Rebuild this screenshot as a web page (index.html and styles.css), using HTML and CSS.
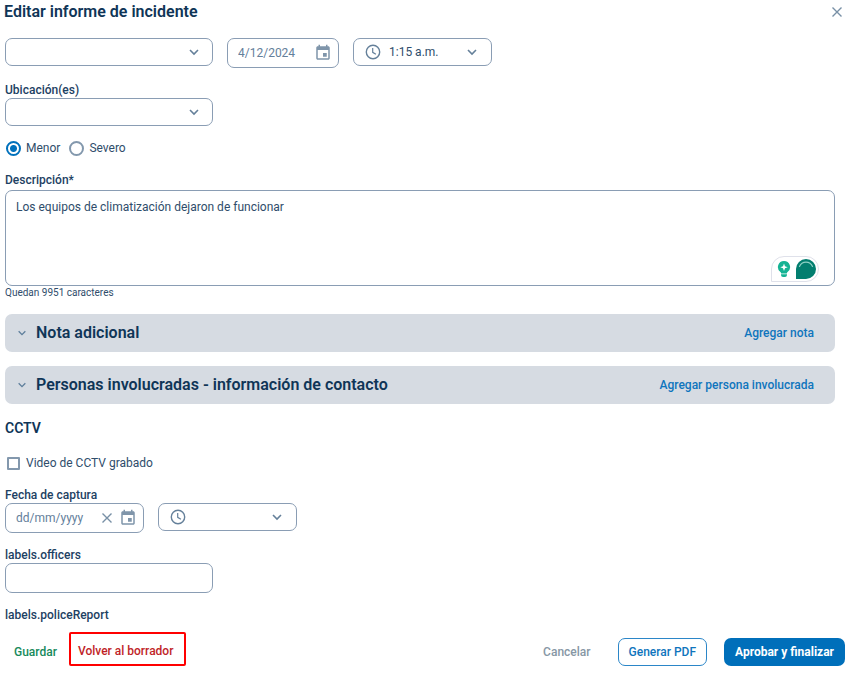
FILE: index.html
```html
<!DOCTYPE html>
<html lang="es">
<head>
  <meta charset="utf-8">
  <meta name="viewport" content="width=device-width, initial-scale=1">
  <title>Editar informe de incidente</title>
  <link rel="stylesheet" href="styles.css">
</head>
<body>
  <svg class="icon-defs" aria-hidden="true">
    <symbol id="icon-chevron" viewBox="0 0 12 12">
      <path d="M2 4l4 4 4-4" fill="none" stroke="currentColor" stroke-width="1.6"/>
    </symbol>
    <symbol id="icon-close" viewBox="0 0 12 12">
      <path d="M1.500 1.500l9 9M10.500 1.500l-9 9" fill="none" stroke="currentColor" stroke-width="1.400"/>
    </symbol>
    <symbol id="icon-calendar" viewBox="0 0 24 24">
      <path d="M17 12h-5v5h5v-5zM16 1v2H8V1H6v2H5c-1.110 0-1.990.9-1.990 2L3 19c0 1.100.89 2 2 2h14c1.100 0 2-.9 2-2V5c0-1.100-.9-2-2-2h-1V1h-2zm3 18H5V8h14v11z" fill="currentColor"/>
    </symbol>
    <symbol id="icon-clock" viewBox="0 0 16 16">
      <circle cx="8" cy="8" r="6.700" fill="none" stroke="currentColor" stroke-width="1.400"/>
      <path d="M7.700 4v4.300l3.200 2" fill="none" stroke="currentColor" stroke-width="1.200"/>
    </symbol>
  </svg>

  <form class="dialog">
    <header class="dialog-header">
      <h1 class="dialog-title">Editar informe de incidente</h1>
      <button type="button" class="icon-button" aria-label="Cerrar">
        <svg class="icon-sm"><use href="#icon-close"/></svg>
      </button>
    </header>

    <main class="dialog-content">
      <div class="row">
        <div class="control control-wide">
          <select class="control-input" aria-label="Tipo de incidente"><option></option></select>
          <svg class="icon-sm"><use href="#icon-chevron"/></svg>
        </div>
        <div class="control control-date">
          <input class="control-input muted" type="text" value="4/12/2024" aria-label="Fecha">
          <button type="button" class="icon-button" aria-label="Abrir calendario">
            <svg class="icon-lg calendar"><use href="#icon-calendar"/></svg>
          </button>
        </div>
        <div class="control control-time">
          <svg class="icon-md"><use href="#icon-clock"/></svg>
          <select class="control-input" aria-label="Hora"><option>1:15 a.m.</option></select>
          <svg class="icon-sm"><use href="#icon-chevron"/></svg>
        </div>
      </div>

      <div class="field">
        <label class="label" for="location">Ubicación(es)</label>
        <div class="control control-wide">
          <select class="control-input" id="location"><option></option></select>
          <svg class="icon-sm"><use href="#icon-chevron"/></svg>
        </div>
      </div>

      <div class="choices severity">
        <label class="choice"><input class="radio" type="radio" name="severity" checked>Menor</label>
        <label class="choice"><input class="radio" type="radio" name="severity">Severo</label>
      </div>

      <div class="field">
        <label class="label" for="description">Descripción*</label>
        <div class="textarea-wrap">
          <textarea class="textarea" id="description" spellcheck="false">Los equipos de climatización dejaron de funcionar</textarea>
          <div class="assistant">
            <svg class="assistant-bulb" viewBox="0 0 14 18">
              <path d="M7 1a6 6 0 0 0-3.800 10.700c.6.500.9 1 1 1.700h5.600c.1-.7.400-1.200 1-1.700A6 6 0 0 0 7 1z" fill="#15b394"/>
              <path d="M7 3.500l1 2.700 2.700 1-2.700 1-1 2.700-1-2.700-2.700-1 2.700-1z" fill="#fff"/>
              <path d="M4 14.300h6v.8a2 2 0 0 1-2 1.900H6a2 2 0 0 1-2-1.900z" fill="#15b394"/>
            </svg>
            <svg class="assistant-mark" viewBox="0 0 20 20">
              <path d="M10 0a10 10 0 0 1 0 20H0V10A10 10 0 0 1 10 0z" fill="#027e6f"/>
              <path d="M3.500 7.500a7 7 0 0 1 13 0" fill="none" stroke="#8ed0c4" stroke-width="1.200" stroke-linecap="round"/>
            </svg>
          </div>
        </div>
        <p class="hint">Quedan 9951 caracteres</p>
      </div>

      <section class="panel">
        <svg class="icon-xs"><use href="#icon-chevron"/></svg>
        <h2 class="panel-title">Nota adicional</h2>
        <button type="button" class="link-button">Agregar nota</button>
      </section>

      <section class="panel">
        <svg class="icon-xs"><use href="#icon-chevron"/></svg>
        <h2 class="panel-title">Personas involucradas - información de contacto</h2>
        <button type="button" class="link-button">Agregar persona involucrada</button>
      </section>

      <h2 class="section-title">CCTV</h2>

      <div class="choices">
        <label class="choice"><input class="checkbox" type="checkbox">Video de CCTV grabado</label>
      </div>

      <div class="field">
        <label class="label" for="capture-date">Fecha de captura</label>
        <div class="row">
          <div class="control control-date control-clearable">
            <input class="control-input muted" id="capture-date" type="text" placeholder="dd/mm/yyyy">
            <button type="button" class="icon-button" aria-label="Borrar fecha">
              <svg class="icon-sm"><use href="#icon-close"/></svg>
            </button>
            <button type="button" class="icon-button" aria-label="Abrir calendario">
              <svg class="icon-lg calendar"><use href="#icon-calendar"/></svg>
            </button>
          </div>
          <div class="control control-time">
            <svg class="icon-md"><use href="#icon-clock"/></svg>
            <select class="control-input" aria-label="Hora de captura"><option></option></select>
            <svg class="icon-sm"><use href="#icon-chevron"/></svg>
          </div>
        </div>
      </div>

      <div class="field">
        <label class="label" for="officers">labels.officers</label>
        <input class="text-input" id="officers" type="text">
      </div>

      <p class="label">labels.policeReport</p>
    </main>

    <footer class="dialog-footer">
      <button type="button" class="button save">Guardar</button>
      <button type="button" class="button draft">Volver al borrador</button>
      <button type="button" class="button cancel">Cancelar</button>
      <button type="button" class="button outlined">Generar PDF</button>
      <button type="submit" class="button primary">Aprobar y finalizar</button>
    </footer>
  </form>
</body>
</html>
```

FILE: styles.css
```css
* {
  box-sizing: border-box;
}

body {
  margin: 0;
  background-color: #fff;
  color: #2f4d6b;
  font-family: Roboto, "Liberation Sans", sans-serif;
  font-size: 12px;
  line-height: 16px;
}

h1,
h2,
p {
  margin: 0;
}

button,
input,
select,
textarea {
  font: inherit;
  color: inherit;
}

.icon-defs {
  display: none;
}

.icon-xs {
  width: 10px;
  height: 10px;
  flex: none;
  color: #5f7f9c;
}

.icon-sm {
  width: 12px;
  height: 12px;
  flex: none;
}

.icon-md {
  width: 16px;
  height: 16px;
  flex: none;
}

.icon-lg {
  width: 18px;
  height: 18px;
  flex: none;
}

.calendar {
  color: #7f95aa;
}

.icon-button {
  display: flex;
  padding: 0;
  border: none;
  background: none;
  color: #7890a6;
  cursor: pointer;
}

.dialog-header {
  display: flex;
  align-items: center;
  justify-content: space-between;
  height: 24px;
  padding: 0 19px 0 4px;
}

.dialog-title {
  color: #0f3557;
  font-size: 16px;
  font-weight: 600;
  line-height: 24px;
}

.dialog-content {
  display: flex;
  flex-direction: column;
  gap: 14px;
  padding: 14px 27px 0 5px;
}

.row {
  display: flex;
  align-items: flex-start;
  gap: 14px;
}

.field {
  display: flex;
  flex-direction: column;
}

.label {
  color: #1d4163;
  font-weight: 500;
}

.control {
  display: flex;
  align-items: center;
  height: 28px;
  padding: 0 12px 0 10px;
  border: 1px solid #8a9db4;
  border-radius: 7px;
  color: #65809a;
}

.control-wide {
  width: 208px;
}

.control-date {
  width: 112px;
  height: 30px;
  padding-right: 6px;
}

.control-clearable {
  width: 139px;
  gap: 6px;
}

.control-time {
  width: 139px;
  gap: 8px;
  padding: 0 13px 0 11px;
}

.control-input {
  flex: 1;
  min-width: 0;
  height: 100%;
  padding: 0;
  border: none;
  outline: none;
  background: none;
  color: #2f4d6b;
  appearance: none;
}

.muted,
.muted::placeholder {
  color: #64809b;
  opacity: 1;
}

.choices {
  display: flex;
  align-items: center;
  gap: 8px;
  height: 20px;
}

.severity {
  height: 16px;
  margin-bottom: 2px;
}

.choice {
  display: flex;
  align-items: center;
  gap: 4px;
}

.radio {
  appearance: none;
  width: 15px;
  height: 15px;
  margin: 0 1px;
  border: 2px solid #8398ad;
  border-radius: 50%;
}

.radio:checked {
  border-color: #0071bc;
  background: radial-gradient(circle, #0071bc 3px, #fff 4px);
}

.checkbox {
  appearance: none;
  width: 13px;
  height: 13px;
  margin: 0 2px;
  border: 2px solid #8398ad;
  border-radius: 1px;
}

.textarea-wrap {
  position: relative;
  display: flex;
  margin-top: 2px;
}

.textarea {
  flex: 1;
  height: 96px;
  padding: 8px 10px;
  border: 1px solid #8a9db4;
  border-radius: 7px;
  outline: none;
  resize: none;
}

/* writing assistant badge, floats over the text area */
.assistant {
  position: absolute;
  right: 16px;
  bottom: 4px;
  display: flex;
  align-items: center;
  gap: 5px;
  padding: 2px 2px 2px 5px;
  border: 1px solid #dfe1ea;
  border-radius: 13px 13px 13px 0;
  background-color: #fff;
}

.assistant-bulb {
  width: 14px;
  height: 18px;
}

.assistant-mark {
  width: 20px;
  height: 20px;
}

.hint {
  font-size: 10px;
  line-height: 14px;
}

.panel {
  display: flex;
  align-items: center;
  height: 38px;
  padding: 0 21px 0 12px;
  border-radius: 7px;
  background-color: #d6dbe2;
}

.panel-title {
  flex: 1;
  margin-left: 9px;
  color: #0f3557;
  font-size: 16px;
  font-weight: 600;
  line-height: 20px;
}

.link-button {
  padding: 0;
  border: none;
  background: none;
  color: #0f75bd;
  font-weight: 500;
  cursor: pointer;
}

.section-title {
  color: #0f3557;
  font-size: 14px;
  font-weight: 600;
  line-height: 21px;
}

.text-input {
  width: 208px;
  height: 30px;
  padding: 0 10px;
  border: 1px solid #8a9db4;
  border-radius: 7px;
  outline: none;
}

.dialog-footer {
  display: flex;
  align-items: flex-end;
  margin-top: 9px;
  padding: 0 17px 0 14px;
}

.button {
  height: 28px;
  padding: 0 10px;
  border: 1px solid transparent;
  border-radius: 7px;
  background: none;
  font-weight: 500;
  white-space: nowrap;
  cursor: pointer;
}

.save {
  padding: 0;
  border: none;
  color: #178a5c;
}

.draft {
  height: 34px;
  margin-left: 12px;
  padding: 4px 11px 0 7px;
  border: 2px solid #f00;
  border-radius: 2px;
  color: #c01f28;
}

.cancel {
  margin-left: auto;
  color: #8797a5;
}

.outlined {
  margin-left: 16px;
  border-color: #2b86c8;
  color: #0f75bd;
}

.primary {
  margin-left: 17px;
  background-color: #006fba;
  color: #fff;
  font-weight: 700;
}
```
